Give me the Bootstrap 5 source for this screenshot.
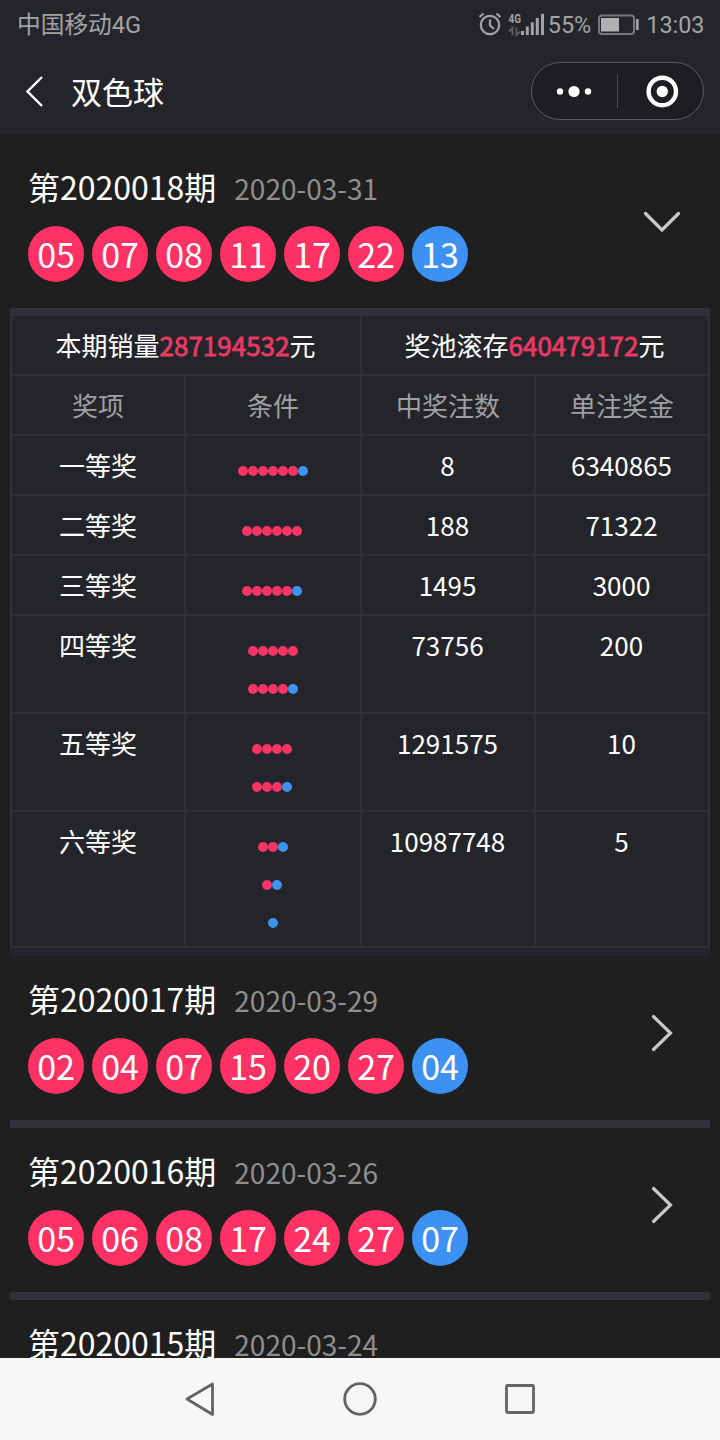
<!DOCTYPE html>
<html lang="zh-CN">
<head>
<meta charset="utf-8">
<meta name="viewport" content="width=device-width, initial-scale=1">
<title>双色球</title>
<link href="https://cdn.jsdelivr.net/npm/bootstrap@5.3.0/dist/css/bootstrap.min.css" rel="stylesheet">
<style>
  body { background: #1f1f1f; color: #fff; font-family: "Noto Sans CJK SC", sans-serif; }
  .screen { height: 1440px; }
  .top-area { height: 134px; background: #24252a; }
  .status-bar { height: 48px; padding: 2px 15.500px 0 17px; color: #a3a3a6; font-family: Roboto, "Noto Sans CJK SC", sans-serif; font-size: 23.4px; line-height: 46px; }
  .carrier { font-size: 23.7px; }
  .status-icons { gap: 7px; }
  .signal { margin-right: -5px; }
  .title-bar { height: 86px; padding: 0 16px 0 24px; }
  .page-title { font-size: 31px; line-height: 40px; margin-left: 27px; }
  .capsule { width: 173px; height: 58px; border: 1px solid #5a5a5f; border-radius: 29px; background: #1e1d22; }
  .feed { padding: 10px 10px 0; }
  .issue { height: 172px; padding: 22px 28px 0 18px; border-bottom: 8px solid #30303a; }
  .issue-head { height: 44px; line-height: 40px; }
  .issue-no { font-size: 32px; }
  .issue-date { font-size: 28px; margin-left: 18px; color: #8f8f8f; }
  .balls { gap: 8px; margin-top: 16px; }
  .ball { width: 56px; height: 56px; font-size: 34px; line-height: 55px; background: #fb3263; }
  .ball.blue { background: #3c91f2; }
  .arrow { width: 40px; height: 40px; margin-top: 35px; fill: none; stroke: #c9c9c9; stroke-width: 3.2; stroke-linecap: round; }
  .detail { background: #24242a; padding-bottom: 8px; }
  .prize { width: 700px; table-layout: fixed; border-collapse: separate; border-spacing: 0; border-left: 2px solid #303138; font-size: 26px; line-height: 38px; }
  .prize > tbody > tr > td, .prize > tbody > tr > th { padding: 10px 0; border: 0 solid #303138; border-width: 0 2px 2px 0; background: #24252a; color: #fff; font-weight: 400; }
  .prize > tbody > tr > td:nth-child(n+3), .prize > tbody > tr > td[colspan] { padding-right: 1px; }
  .prize > tbody > tr > th { color: #a0a0a3; }
  .amount { color: #e83a64; -webkit-text-stroke: .8px #e83a64; }
  .dots { height: 38px; padding-top: 20px; }
  .dots.even { padding-right: 2px; }
  .dots i { width: 10px; height: 10px; border-radius: 50%; background: #f63465; }
  .dots i.b { background: #3f93f0; }
  .nav-keys { height: 82px; gap: 120px; background: #f7f7f7; }
  .nav-keys svg { width: 40px; height: 40px; fill: none; stroke: #646464; stroke-width: 2.800; stroke-linejoin: round; }
</style>
</head>
<body>
<div class="screen d-flex flex-column overflow-hidden">
  <header class="top-area flex-shrink-0">
    <div class="status-bar d-flex justify-content-between">
      <span class="carrier">中国移动4G</span>
      <div class="status-icons d-flex align-items-center">
        <svg class="signal" width="68" height="28" viewBox="0 0 68 28" fill="none" stroke="#a3a3a6">
          <circle cx="12" cy="14" r="9.200" stroke-width="2.200"/>
          <path d="M12 8.500v6l4 3.500" stroke-width="2.200"/>
          <path d="M1.500 6 5.500 2.500M22.500 6 18.500 2.500" stroke-width="2.200"/>
          <text x="30.500" y="11.700" fill="#a3a3a6" stroke="none" font-size="13" font-weight="700" textLength="12.500" lengthAdjust="spacingAndGlyphs">4G</text>
          <path d="M34.500 24v-7l-3.500 3.500M38.500 16.500V24l3.500-3.500" stroke="#5e5f63" stroke-width="1.800"/>
          <path d="M44.500 24v-4M49.300 24v-8.500M54.300 24V11.300M59.300 24V7M64.500 24V2.700" stroke-width="3"/>
        </svg>
        <span>55%</span>
        <svg width="41" height="22" viewBox="0 0 41 22" fill="none">
          <rect x="1" y="1.500" width="35" height="18.500" rx="3" stroke="#77787b" stroke-width="2"/>
          <rect x="3" y="4" width="18" height="13.500" fill="#b0b0b3"/>
          <path d="M39.300 5v11" stroke="#a3a3a6" stroke-width="2.800"/>
        </svg>
        <span>13:03</span>
      </div>
    </div>
    <div class="title-bar d-flex align-items-center">
      <svg width="20" height="32" viewBox="0 0 20 32" fill="none" stroke="#fff" stroke-width="2.400"><path d="M18 2 3.500 16.500 18 31"/></svg>
      <h1 class="page-title fw-normal mb-0">双色球</h1>
      <div class="capsule ms-auto">
        <svg class="d-block" width="171" height="56" viewBox="0 0 171 56" fill="#fff">
          <circle cx="28" cy="28.500" r="3.200"/><circle cx="42" cy="28.500" r="5.600"/><circle cx="56" cy="28.500" r="3.200"/>
          <path d="M85.500 11v34" stroke="#4d4d52" stroke-width="1"/>
          <circle cx="130.300" cy="28.500" r="13.700" fill="none" stroke="#fff" stroke-width="4.400"/><circle cx="130.300" cy="28.500" r="5.700"/>
        </svg>
      </div>
    </div>
  </header>

  <main class="feed flex-grow-1 overflow-hidden">
    <section class="issue d-flex justify-content-between">
      <div>
        <div class="issue-head d-flex align-items-baseline"><span class="issue-no">第2020018期</span><span class="issue-date">2020-03-31</span></div>
        <div class="balls d-flex text-center">
          <span class="ball rounded-circle">05</span><span class="ball rounded-circle">07</span><span class="ball rounded-circle">08</span><span class="ball rounded-circle">11</span><span class="ball rounded-circle">17</span><span class="ball rounded-circle">22</span><span class="ball blue rounded-circle">13</span>
        </div>
      </div>
      <svg class="arrow" viewBox="0 0 40 40"><path d="M3.500 12.500 20 29 36.500 12.500"/></svg>
    </section>

    <div class="detail">
      <table class="table prize text-center align-top mb-0">
        <colgroup><col style="width:174px"><col style="width:176px"><col style="width:174px"><col style="width:174px"></colgroup>
        <tbody>
          <tr><td colspan="2">本期销量<span class="amount">287194532</span>元</td><td colspan="2">奖池滚存<span class="amount">640479172</span>元</td></tr>
          <tr><th>奖项</th><th>条件</th><th>中奖注数</th><th>单注奖金</th></tr>
          <tr><td>一等奖</td><td><div class="dots d-flex justify-content-center"><i></i><i></i><i></i><i></i><i></i><i></i><i class="b"></i></div></td><td>8</td><td>6340865</td></tr>
          <tr><td>二等奖</td><td><div class="dots even d-flex justify-content-center"><i></i><i></i><i></i><i></i><i></i><i></i></div></td><td>188</td><td>71322</td></tr>
          <tr><td>三等奖</td><td><div class="dots even d-flex justify-content-center"><i></i><i></i><i></i><i></i><i></i><i class="b"></i></div></td><td>1495</td><td>3000</td></tr>
          <tr><td>四等奖</td><td><div class="dots d-flex justify-content-center"><i></i><i></i><i></i><i></i><i></i></div><div class="dots d-flex justify-content-center"><i></i><i></i><i></i><i></i><i class="b"></i></div></td><td>73756</td><td>200</td></tr>
          <tr><td>五等奖</td><td><div class="dots even d-flex justify-content-center"><i></i><i></i><i></i><i></i></div><div class="dots even d-flex justify-content-center"><i></i><i></i><i></i><i class="b"></i></div></td><td>1291575</td><td>10</td></tr>
          <tr><td>六等奖</td><td><div class="dots d-flex justify-content-center"><i></i><i></i><i class="b"></i></div><div class="dots even d-flex justify-content-center"><i></i><i class="b"></i></div><div class="dots d-flex justify-content-center"><i class="b"></i></div></td><td>10987748</td><td>5</td></tr>
        </tbody>
      </table>
    </div>

    <section class="issue d-flex justify-content-between">
      <div>
        <div class="issue-head d-flex align-items-baseline"><span class="issue-no">第2020017期</span><span class="issue-date">2020-03-29</span></div>
        <div class="balls d-flex text-center">
          <span class="ball rounded-circle">02</span><span class="ball rounded-circle">04</span><span class="ball rounded-circle">07</span><span class="ball rounded-circle">15</span><span class="ball rounded-circle">20</span><span class="ball rounded-circle">27</span><span class="ball blue rounded-circle">04</span>
        </div>
      </div>
      <svg class="arrow" viewBox="0 0 40 40"><path d="M11.500 3.500 28.500 20 11.500 36.500"/></svg>
    </section>
    <section class="issue d-flex justify-content-between">
      <div>
        <div class="issue-head d-flex align-items-baseline"><span class="issue-no">第2020016期</span><span class="issue-date">2020-03-26</span></div>
        <div class="balls d-flex text-center">
          <span class="ball rounded-circle">05</span><span class="ball rounded-circle">06</span><span class="ball rounded-circle">08</span><span class="ball rounded-circle">17</span><span class="ball rounded-circle">24</span><span class="ball rounded-circle">27</span><span class="ball blue rounded-circle">07</span>
        </div>
      </div>
      <svg class="arrow" viewBox="0 0 40 40"><path d="M11.500 3.500 28.500 20 11.500 36.500"/></svg>
    </section>
    <section class="issue border-0">
      <div class="issue-head d-flex align-items-baseline"><span class="issue-no">第2020015期</span><span class="issue-date">2020-03-24</span></div>
    </section>
  </main>

  <footer class="nav-keys flex-shrink-0 d-flex justify-content-center align-items-center">
    <svg viewBox="0 0 40 40"><path d="M32.500 5v30.500L7 20z"/></svg>
    <svg viewBox="0 0 40 40"><circle cx="20" cy="20" r="15.300"/></svg>
    <svg viewBox="0 0 40 40"><rect x="6.500" y="6.500" width="27" height="27" rx="1"/></svg>
  </footer>
</div>
<script src="https://cdn.jsdelivr.net/npm/bootstrap@5.3.0/dist/js/bootstrap.bundle.min.js"></script>
</body>
</html>
